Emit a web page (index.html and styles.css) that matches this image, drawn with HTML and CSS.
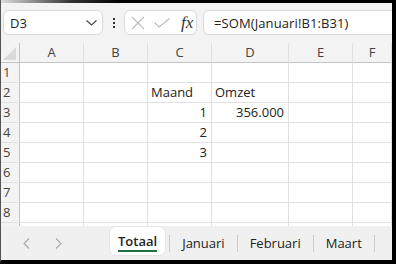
FILE: index.html
```html
<!DOCTYPE html>
<html lang="nl">
  <head>
    <meta charset="UTF-8" />
    <title>Totaal</title>
    <link rel="stylesheet" href="styles.css">
  </head>
  <body>
    <div class="frame">
      <div class="edge-top"></div>
      <div class="main">
        <div class="toolbar">
          <div class="box name-box">
            <span>D3</span>
            <svg width="11" height="6" viewBox="0 0 11 6"><polyline points="0.5,0.5 5.5,5 10.5,0.5" fill="none" stroke="#444" stroke-width="1.1"/></svg>
          </div>
          <div class="dots"><i></i><i></i><i></i></div>
          <div class="box fx-box">
            <svg width="14" height="14" viewBox="0 0 14 14"><path d="M1 1L13 13M13 1L1 13" stroke="#bdbdbd" stroke-width="1.1" fill="none"/></svg>
            <svg width="16" height="10" viewBox="0 0 16 10"><polyline points="0.5,4.5 5,9 15.5,0.5" fill="none" stroke="#bdbdbd" stroke-width="1.1"/></svg>
            <span class="fx">fx</span>
          </div>
          <div class="box formula">=SOM(Januari!B1:B31)</div>
        </div>

        <div class="sheet">
          <div class="grid">
            <div class="corner"></div>
            <div class="ch">A</div><div class="ch">B</div><div class="ch">C</div><div class="ch">D</div><div class="ch">E</div><div class="ch">F</div>

            <div class="rh">1</div><div></div><div></div><div></div><div></div><div></div><div></div>
            <div class="rh">2</div><div></div><div></div><div>Maand</div><div>Omzet</div><div></div><div></div>
            <div class="rh">3</div><div></div><div></div><div class="num">1</div><div class="num">356.000</div><div></div><div></div>
            <div class="rh">4</div><div></div><div></div><div class="num">2</div><div></div><div></div><div></div>
            <div class="rh">5</div><div></div><div></div><div class="num">3</div><div></div><div></div><div></div>
            <div class="rh">6</div><div></div><div></div><div></div><div></div><div></div><div></div>
            <div class="rh">7</div><div></div><div></div><div></div><div></div><div></div><div></div>
            <div class="rh">8</div><div></div><div></div><div></div><div></div><div></div><div></div>
            <div class="rh"></div><div></div><div></div><div></div><div></div><div></div><div></div>
          </div>
        </div>

        <div class="tabs">
          <div class="nav">
            <svg width="7" height="11" viewBox="0 0 7 11"><polyline points="6,0.5 1,5.5 6,10.5" fill="none" stroke="#a8a8a8" stroke-width="1.1"/></svg>
            <svg width="7" height="11" viewBox="0 0 7 11"><polyline points="1,0.5 6,5.5 1,10.5" fill="none" stroke="#a8a8a8" stroke-width="1.1"/></svg>
          </div>
          <div class="tab active"><span>Totaal</span></div>
          <div class="sep"></div>
          <div class="tab">Januari</div>
          <div class="sep"></div>
          <div class="tab">Februari</div>
          <div class="sep"></div>
          <div class="tab">Maart</div>
          <div class="sep"></div>
        </div>
      </div>
    </div>
  </body>
</html>
```

FILE: styles.css
```css
*,
*::before,
*::after {
  box-sizing: border-box;
}
* {
  margin: 0;
}
body {
  width: 396px;
  height: 264px;
  overflow: hidden;
  background-color: #000;
  font-family: "Open Sans", "Noto Sans", sans-serif;
  font-size: 13px;
  color: #222;
}

.frame {
  display: flex;
  flex-direction: column;
  height: 264px;
  border-left: 1px solid #555;
  border-right: 4px solid #000;
  border-bottom: 4px solid #000;
}

.edge-top {
  height: 3px;
  background: linear-gradient(to right, #dcdcdc 0, #333 70px, #000 120px);
}

.main {
  flex: 1;
  display: flex;
  flex-direction: column;
  overflow: hidden;
  background-color: #f3f3f3;
}

/* formula bar */
.toolbar {
  height: 40px;
  flex-shrink: 0;
  display: flex;
  align-items: flex-start;
  padding: 7px 0 0 2px;
  white-space: nowrap;
}

.box {
  height: 25px;
  display: flex;
  align-items: center;
  background-color: #fff;
  border: 1px solid #dadada;
  border-radius: 6px;
}

.name-box {
  width: 100px;
  justify-content: space-between;
  padding: 0 5px 0 6px;
}

.dots {
  display: flex;
  flex-direction: column;
  gap: 2px;
  margin: 8px 9px 0 10px;
}
.dots i {
  width: 2px;
  height: 2px;
  background-color: #333;
}

.fx-box {
  width: 73px;
  padding: 0 0 0 6px;
  gap: 9px;
}

.fx {
  font-family: "Liberation Serif", serif;
  font-style: italic;
  font-size: 17px;
  color: #333;
  margin-left: 2px;
}

.formula {
  flex: 1;
  margin-left: 6px;
  margin-right: -10px;
  padding-left: 10px;
  letter-spacing: 0.1px;
}

/* grid */
.sheet {
  height: 183px;
  flex-shrink: 0;
  overflow: hidden;
  background-color: #fff;
}

.grid {
  display: grid;
  grid-template-columns: 19px 64px 64px 64px 77px 64px 1fr;
  grid-auto-rows: 20px;
}

.grid > div {
  border-right: 1px solid #e1e1e1;
  border-bottom: 1px solid #e1e1e1;
  padding: 0 3px;
  line-height: 19px;
  white-space: nowrap;
  overflow: hidden;
}

.grid > .num {
  text-align: right;
  padding-right: 4px;
}

.grid > .ch,
.grid > .rh,
.grid > .corner {
  background-color: #f3f3f3;
  color: #444;
}

.grid > .ch {
  text-align: center;
  border-bottom-color: #c4c4c4;
}

.grid > .rh {
  padding: 0 0 0 2px;
  border-right-color: #c4c4c4;
}

.grid > .corner {
  position: relative;
  border-bottom-color: #c4c4c4;
  border-right-color: #c4c4c4;
}
.corner::after {
  content: "";
  position: absolute;
  left: 2px;
  bottom: 2px;
  border-left: 13px solid transparent;
  border-bottom: 13px solid #dadada;
}

/* sheet tabs */
.tabs {
  height: 34px;
  flex-shrink: 0;
  display: flex;
  align-items: center;
  background-color: #f0f0f0;
  white-space: nowrap;
}

.nav {
  width: 109px;
  display: flex;
  gap: 25px;
  padding-left: 22px;
}

.tab {
  padding: 0 12px;
  color: #222;
}

.tab.active {
  align-self: flex-start;
  margin: 1px 4px 0 0;
  height: 28px;
  padding: 0 8px;
  background-color: #fff;
  border-radius: 6px;
  box-shadow: 0 0 0 1px #e6e6e6;
  font-weight: 600;
  display: flex;
  align-items: center;
}
.tab.active span {
  padding-top: 2px;
  border-bottom: 2px solid #1e7145;
  line-height: 18px;
}

.sep {
  width: 1px;
  height: 17px;
  background-color: #cacaca;
}
```
